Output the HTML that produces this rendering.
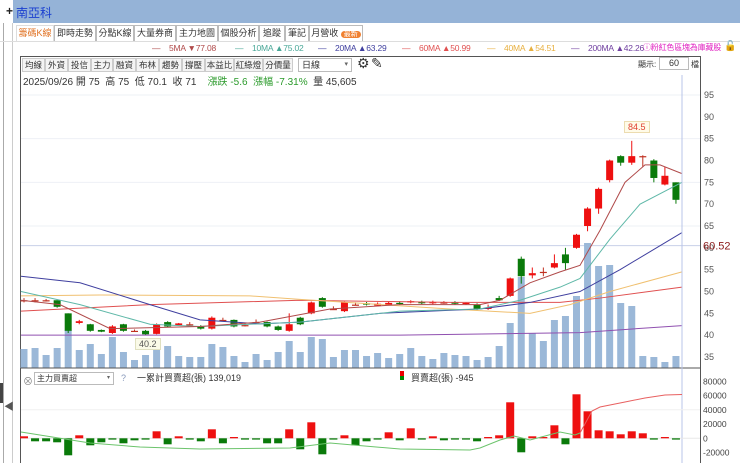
<!DOCTYPE html><html><head><meta charset="utf-8"><style>
*{margin:0;padding:0;box-sizing:border-box}
body{width:740px;height:463px;overflow:hidden;background:#fff;font-family:"Liberation Sans","Noto Sans CJK TC",sans-serif;position:relative;font-size:10px;color:#333}
.a{position:absolute;white-space:nowrap}
.tab{position:absolute;top:25px;height:16px;border:1px solid #bbb;border-bottom:none;font-size:9px;line-height:15px;text-align:center;background:#fff;color:#333;overflow:hidden}
.btn{position:absolute;top:58px;height:14px;border:1px solid #ccc;background:#f4f4f4;font-size:8.5px;line-height:12px;text-align:center;color:#333;overflow:hidden}
.lg{position:absolute;top:43px;font-size:8.5px;white-space:nowrap;letter-spacing:-0.2px}
</style></head><body>
<div class="a" style="left:0;top:0;width:740px;height:23px;background:#95b3d7"></div>
<div class="a" style="left:0;top:0;width:13px;height:23px;background:#fff"></div>
<div class="a" style="left:6px;top:4px;font-size:12px;font-weight:bold;color:#222">+</div>
<div class="a" style="left:16px;top:4px;font-size:12px;color:#1a3fd0">南亞科</div>
<div class="a" style="left:3px;top:23px;width:1px;height:440px;background:#aaa"></div>
<div class="a" style="left:12px;top:23px;width:1px;height:440px;background:#ccc"></div>
<div class="a" style="left:4px;top:398px;font-size:10px;color:#555">◀</div>
<div class="a" style="left:0;top:383px;width:3px;height:20px;background:#444"></div>
<div class="tab" style="left:16px;width:38px;color:#e07020;border-color:#ddd">籌碼K線</div>
<div class="tab" style="left:54px;width:42px">即時走勢</div>
<div class="tab" style="left:96px;width:38px">分點K線</div>
<div class="tab" style="left:134px;width:42px">大量券商</div>
<div class="tab" style="left:176px;width:42px">主力地圖</div>
<div class="tab" style="left:218px;width:41px">個股分析</div>
<div class="tab" style="left:259px;width:26px">追蹤</div>
<div class="tab" style="left:285px;width:24px">筆記</div>
<div class="tab" style="left:309px;width:54px">月營收 <span style="background:#f08030;color:#fff;border-radius:6px;font-size:7px;padding:0 3px">最新</span></div>
<div class="a" style="left:0;top:41px;width:740px;height:1px;background:#ddd"></div>
<div class="lg" style="left:152px;color:#b04a4a">—&nbsp;&nbsp;&nbsp; 5MA ▼77.08</div>
<div class="lg" style="left:235px;color:#4aa898">—&nbsp;&nbsp;&nbsp; 10MA ▲75.02</div>
<div class="lg" style="left:318px;color:#3f3f9f">—&nbsp;&nbsp;&nbsp; 20MA ▲63.29</div>
<div class="lg" style="left:402px;color:#e05050">—&nbsp;&nbsp;&nbsp; 60MA ▲50.99</div>
<div class="lg" style="left:487px;color:#e8b040">—&nbsp;&nbsp;&nbsp; 40MA ▲54.51</div>
<div class="lg" style="left:571px;color:#7040a0">—&nbsp;&nbsp;&nbsp; 200MA ▲42.26</div>
<div class="lg" style="left:643px;top:42px;color:#e020c0;font-size:8px">ⓘ粉紅色區塊為庫藏股</div>
<div class="a" style="top:41px;left:724px;font-size:10px;color:#000">🔓</div>
<div class="a" style="left:20px;top:56px;width:681px;height:407px;border-left:1px solid #555;border-top:1px solid #555;border-right:1px solid #555"></div>
<div class="btn" style="left:22px;width:23px">均線</div><div class="btn" style="left:45px;width:23px">外資</div><div class="btn" style="left:68px;width:23px">投信</div><div class="btn" style="left:91px;width:22px">主力</div><div class="btn" style="left:113px;width:23px">融資</div><div class="btn" style="left:136px;width:23px">布林</div><div class="btn" style="left:159px;width:23px">趨勢</div><div class="btn" style="left:182px;width:23px">撐壓</div><div class="btn" style="left:205px;width:29px">本益比</div><div class="btn" style="left:234px;width:29px">紅綠燈</div><div class="btn" style="left:263px;width:30px">分價量</div>
<div class="a" style="left:298px;top:58px;width:54px;height:14px;border:1px solid #bbb;font-size:9px;line-height:12px;padding-left:3px">日線<span style="position:absolute;right:3px;font-size:7px;color:#666">▾</span></div>
<div class="a" style="left:357px;top:55px;font-size:14px;color:#333">⚙</div>
<div class="a" style="left:371px;top:55px;font-size:14px;color:#333">✎</div>
<div class="a" style="left:23px;top:73px;font-size:10px;color:#333">2025/09/26 開 75&nbsp; 高 75&nbsp; 低 70.1&nbsp; 收 71&nbsp;&nbsp;&nbsp; <span style="color:#2a9a2a">漲跌 -5.6&nbsp; 漲幅 -7.31%</span>&nbsp; 量 45,605</div>
<div class="a" style="left:638px;top:59px;font-size:8px;color:#333">顯示:</div>
<div class="a" style="left:659px;top:57px;width:30px;height:13px;border:1px solid #bbb;font-size:9px;text-align:center;line-height:11px">60</div>
<div class="a" style="left:691px;top:59px;font-size:8px;color:#333">檔</div>
<svg class="a" style="left:0;top:0" width="740" height="463" id="s"></svg>
<div class="a" style="left:23px;top:373px;font-size:10px;color:#888">⊗</div>
<div class="a" style="left:34px;top:372px;width:80px;height:13px;border:1px solid #bbb;font-size:8px;line-height:11px;padding-left:2px">主力買賣超<span style="position:absolute;right:3px;color:#666;font-size:6px">▾</span></div>
<div class="a" style="left:121px;top:373px;font-size:9px;color:#89b">?</div>
<div class="a" style="left:137px;top:371px;font-size:9px;color:#333">一累計買賣超(張) 139,019</div>
<div class="a" style="left:400px;top:371px;width:4px;height:5px;background:#e00"></div>
<div class="a" style="left:400px;top:376px;width:4px;height:4px;background:#080"></div>
<div class="a" style="left:411px;top:371px;font-size:9px;color:#333">買賣超(張) -945</div>
<div class="a" style="left:624px;top:121px;font-size:9px;color:#e04030;background:#fffbe8;border:1px solid #ecdcb0;padding:0 3px">84.5</div>
<div class="a" style="left:135px;top:338px;font-size:9px;color:#555;background:#fafae8;border:1px solid #e0e0c0;padding:0 3px">40.2</div>
<script>
const s=document.getElementById('s');let h='';
const Y=p=>95+(95-p)*4.367;const X=i=>24+i*11.05;
for(let p=35;p<=95;p+=5){h+=`<text x="704" y="${Y(p)+3}" font-size="9" fill="#555" font-family="Liberation Sans">${p}</text>`;if(p%10==5&&p>60)h+=`<line x1="21" x2="700" y1="${Y(p)}" y2="${Y(p)}" stroke="#eef0f6"/>`}
h+=`<line x1="21" x2="700" y1="${Y(60.52)}" y2="${Y(60.52)}" stroke="#c8d0e8"/><text x="703" y="${Y(60.52)+4}" font-size="11" fill="#8b1a1a" font-family="Liberation Sans">60.52</text>`;
const vol=[19,20,13,20,38,18,24,14,31,16,8,13,20,22,12,11,11,24,21,12,6,14,8,16,27,16,31,29,11,18,18,12,15,10,14,20,12,9,15,13,12,8,11,22,45,91,35,27,48,52,72,125,102,103,65,62,12,11,6,12];
vol.forEach((v,i)=>h+=`<rect x="${X(i)-3.5}" y="${368-v}" width="7" height="${v}" fill="#9bb8d8"/>`);
const c=[[48,48,48.5,47.5],[48,48,48.5,47.5],[48,48,48.3,47.7],[48,46.5,48,46.3],[45,41,45,40.5],[42.8,43.2,43.5,42.5],[42.5,41,42.6,40.8],[41.2,40.8,41.3,40.7],[40.5,42,42.3,40.3],[42.5,41,42.6,40.8],[41,41,41.3,40.8],[41,40.2,41.2,40],[40.3,42.5,42.7,40.2],[43,42,43.2,41.8],[42.3,42.7,42.8,42.2],[42.5,42.5,43,42.3],[42,41.5,42.3,41.3],[41.5,44,44.3,41.3],[43.5,43.5,44,43.2],[43.5,42,43.6,41.8],[42.3,42.3,42.8,42],[43,43,43.6,42.7],[43,42,43.1,41.8],[42,41.2,42.2,41],[41,42.5,45,40.8],[44,42.5,44.2,42.3],[45,47.5,47.7,44.8],[48.5,46.5,48.7,46.3],[46,46,46.6,45.8],[45.5,47.5,47.7,45.3],[47,47,47.5,46.8],[47.3,47,47.6,46.8],[46.8,47.2,47.5,46.6],[47,47.4,47.6,46.8],[47.4,47.2,47.8,47],[47.5,47.8,48,47.3],[47.6,47.3,47.9,47.1],[47.3,47.6,47.9,47.1],[47.5,47.5,47.8,47.2],[47.6,47.2,47.8,47],[47.2,47.4,47.6,47],[47,46,47.3,45.8],[46,46.3,47,45.8],[48.5,48,49,47.8],[49,53,53.2,48.8],[57.5,53.5,58,51.8],[53.7,54.2,55.5,53],[54.5,54.5,55.5,53.5],[55.5,56.5,58.5,55.3],[58.5,56.5,60,55],[60,63,63.2,59.8],[65,69,69.3,63.8],[69,73.5,73.8,67.8],[75.5,80,80.2,75],[81,79.5,81.2,78.8],[79.5,81,84.5,79],[81,81,81.2,78.5],[80,76,80.3,75],[74.5,76.5,78.5,74.3],[75,71,75,70.1]];
c.forEach((d,i)=>{let[o,cl,hi,lo]=d;let col=cl>o?'#ee1010':cl<o?'#0a7a0a':'#c03020';let x=X(i);h+=`<line x1="${x}" x2="${x}" y1="${Y(hi)}" y2="${Y(lo)}" stroke="${col}"/>`;let t=Y(Math.max(o,cl)),b=Y(Math.min(o,cl));h+=`<rect x="${x-3.5}" y="${t}" width="7" height="${Math.max(b-t,1.2)}" fill="${col}"/>`});
const pl=(pts,col)=>{h+=`<polyline fill="none" stroke="${col}" stroke-width="1" points="${pts.map(p=>p[0]+','+Y(p[1])).join(' ')}"/>`};
pl([[21,40],[400,40],[580,40.6],[682,42.2]],'#9050b0');
pl([[21,45.5],[150,47],[300,48],[450,47.5],[560,47.5],[600,48.5],[682,51]],'#e05050');
pl([[21,49],[100,49.2],[250,49],[300,48.2],[450,46],[530,45],[570,47],[610,50],[682,54.5]],'#f0c070');
pl([[21,53.5],[80,52],[150,47],[200,43.5],[260,42.6],[300,43],[380,45],[480,46],[530,47.5],[580,50],[620,55],[682,63.5]],'#3f3f9f');
pl([[21,50],[80,47],[150,42.5],[200,42],[300,43],[400,45.5],[480,46],[520,48],[560,51],[580,53],[610,62],[640,70],[682,75]],'#5fb8a8');
pl([[21,48],[60,47],[110,41.5],[200,42],[260,43],[330,46],[400,47],[480,47],[500,48],[530,52],[560,54.5],[580,56],[600,64],[625,75],[645,79],[660,79],[682,77]],'#b04a4a');
h+=`<line x1="21" x2="700" y1="368" y2="368" stroke="#555"/><line x1="682" x2="682" y1="75" y2="463" stroke="#b8c4e8"/>`;
const Z=438.3;
[[80000,381.4],[60000,395.6],[40000,409.8],[20000,424],[0,438.3],[-20000,452.6]].forEach(([v,y])=>h+=`<text x="703" y="${y+3}" font-size="8.5" fill="#444" font-family="Liberation Sans">${v}</text>`);
h+=`<line x1="21" x2="700" y1="409.8" y2="409.8" stroke="#f0f0f0"/><line x1="21" x2="700" y1="${Z}" y2="${Z}" stroke="#e8e8e8"/>`;
const bb=[2,-3,-3,-4,-17,3,-7,-4,-1,-5,-2,-1,7,-6,2,0,-3,9,-5,1,-1,0,-5,-5,9,-11,16,-16,0,3,-7,-3,-1,6,-2,10,0,2,-2,-1,0,-3,1,3,36,-14,2,1,13,-6,44,27,8,7,4,7,5,0,1,-1];
bb.forEach((v,i)=>{let hh=Math.max(Math.abs(v),1.3);h+=`<rect x="${X(i)-4}" y="${v>0?Z-hh:Z}" width="8" height="${hh}" fill="${v>0?'#ee1010':'#0a7a0a'}"/>`});
h+=`<polyline fill="none" stroke="#6cc46c" points="21,432 90,443 140,447 200,449 290,448 330,443 400,449 470,450 480,448 500,440 514,436 530,440 560,432 575,435 580,433"/>`;
h+=`<polyline fill="none" stroke="#e86060" points="580,433 592,411 600,407 625,402 645,398 665,395 682,394.5"/>`;
s.innerHTML=h;
</script>
</body></html>
